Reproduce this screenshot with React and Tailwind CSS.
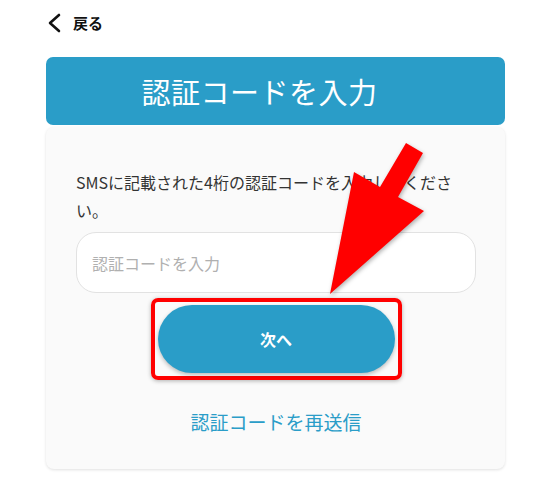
export default function App() {
  return (
    <div
      className="relative w-[553px] h-[480px] bg-white overflow-hidden"
      style={{ fontFamily: '"Noto Sans CJK JP", "Noto Sans", sans-serif' }}
    >
      <header className="flex items-center h-[44px] pl-[46px] pt-[1px]">
        <svg width="18" height="20" viewBox="0 0 18 20" className="mr-[9px]">
          <path d="M13 2 L4 10 L13 18" fill="none" stroke="#111" strokeWidth="2.6" strokeLinecap="round" strokeLinejoin="round" />
        </svg>
        <span className="text-[15px] font-bold text-[#111] leading-none">戻る</span>
      </header>

      <main className="ml-[46px] w-[459px] mt-[13px]">
        <div className="h-[68px] rounded-[7px] bg-[#2a9dc8] flex items-center justify-center pr-[32px]">
          <h1 className="text-white text-[29px] leading-none tracking-[0.5px]">認証コードを入力</h1>
        </div>

        <section className="mt-[2px] h-[342px] bg-[#fafafa] rounded-[8px] shadow-[0_1px_3px_rgba(0,0,0,0.12)] pl-[30px] pr-[29px] pt-[41px]">
          <p className="text-[16px] leading-[28px] text-[#333]">
            SMSに記載された4桁の認証コードを入力してください。
          </p>
          <input
            type="text"
            placeholder="認証コードを入力"
            className="mt-[8px] w-full h-[61px] rounded-[20px] border border-[#e2e2e2] bg-white px-[15px] text-[16px] placeholder:text-[#b0b0b0] outline-none"
          />
          <div className="mt-[5px] flex justify-center">
            <div className="w-[251px] h-[82px] border-[4px] border-[#ff0000] rounded-[7px] p-[3px] shadow-[0_1px_4px_rgba(0,0,0,0.3)]">
              <button className="w-full h-full rounded-full bg-[#2a9dc8] text-white text-[16px] font-bold shadow-[0_2px_4px_rgba(0,0,0,0.25)]">
                次へ
              </button>
            </div>
          </div>
          <div className="mt-[31px] text-center">
            <a className="text-[19px] text-[#2a9dc8] leading-none">認証コードを再送信</a>
          </div>
        </section>
      </main>

      <svg className="absolute left-0 top-0 pointer-events-none" width="553" height="480" viewBox="0 0 553 480">
        <polygon
          points="406,143 423,153 398,197 424,211 330,294 354,172 380,187"
          fill="#ff0000"
          style={{ filter: 'drop-shadow(1px 2px 2px rgba(0,0,0,0.3))' }}
        />
      </svg>
    </div>
  );
}
